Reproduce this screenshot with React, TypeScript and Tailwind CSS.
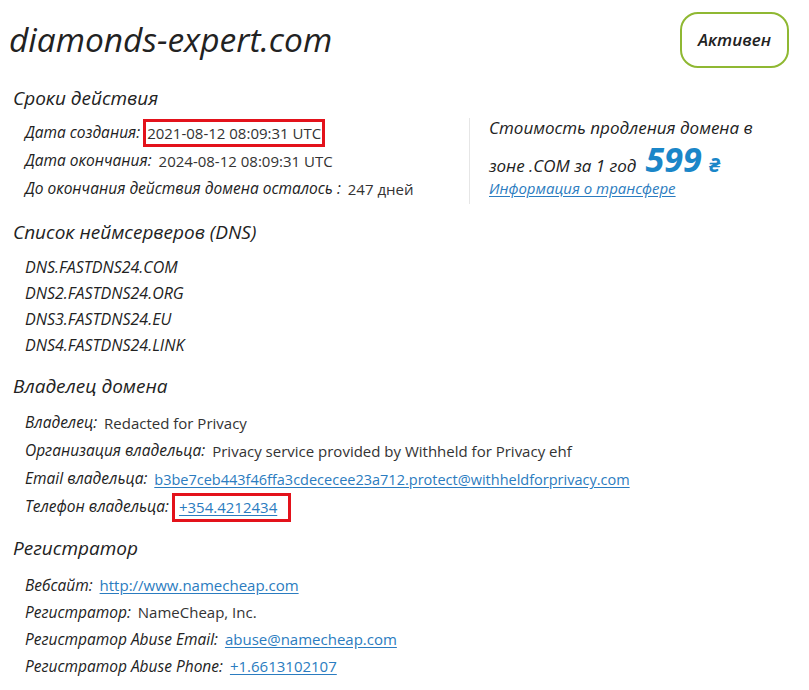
const font = { fontFamily: '"Open Sans", "Noto Sans", sans-serif' }

const linkCls = 'text-[#2b7cc0] underline underline-offset-2'

function Heading({ children, className = '' }: { children: React.ReactNode; className?: string }) {
  return (
    <h2 className={`pl-[13px] h-[24px] leading-[24px] text-[19px] italic text-[#222] ${className}`}>
      {children}
    </h2>
  )
}

function Row({ label, children, h }: { label: string; children: React.ReactNode; h: string }) {
  return (
    <div className={`flex items-center pl-[25px] ${h}`}>
      <span className="italic text-[15.5px] text-[#222] mr-[7px]">{label}</span>
      <span className="text-[15px] text-[#333]">{children}</span>
    </div>
  )
}

export default function App() {
  return (
    <div className="w-[809px] h-[690px] bg-white overflow-hidden" style={font}>
      {/* header */}
      <div className="flex items-center justify-between pt-[12px] pr-[20px]">
        <h1 className="pl-[9px] text-[33.5px] italic text-[#222] leading-none">diamonds-expert.com</h1>
        <div className="w-[109px] h-[56px] rounded-[18px] border-[2.5px] border-[#8fb832] flex items-center justify-center italic font-semibold text-[17px] text-[#222]">
          Активен
        </div>
      </div>

      {/* terms */}
      <Heading className="mt-[18px]">Сроки действия</Heading>
      <div className="flex mt-[9px] h-[84px]">
        <div className="w-[469px]">
          <Row label="Дата создания:" h="h-[28px]">
            <span className="inline-flex items-center h-[28px] px-[1px] -ml-[4px] border-[3px] border-[#e3121b]">
              2021-08-12 08:09:31 UTC
            </span>
          </Row>
          <Row label="Дата окончания:" h="h-[28px]">2024-08-12 08:09:31 UTC</Row>
          <Row label="До окончания действия домена осталось :" h="h-[28px]">247 дней</Row>
        </div>
        <div className="border-l border-[#e6e6e6] h-[86px] -mt-[1px]" />
        <div className="pl-[19px] text-[#222] italic text-[17px] h-[84px]">
          <div className="leading-[28px] -mt-[5px]">Стоимость продления домена в</div>
          <div className="flex items-baseline h-[32px]">
            <span>зоне .COM за 1 год</span>
            <span className="ml-[9px] text-[34px] font-bold text-[#1a86c8] leading-none">599</span>
            <span className="ml-[7px] text-[20px] font-bold text-[#1a86c8]">₴</span>
          </div>
          <a className={`${linkCls} block text-[15px] leading-[28px]`}>Информация о трансфере</a>
        </div>
      </div>

      {/* DNS */}
      <Heading className="mt-[17px]">Список неймсерверов (DNS)</Heading>
      <div className="mt-[10px] pl-[25px] italic text-[16px] text-[#222]">
        {['DNS.FASTDNS24.COM', 'DNS2.FASTDNS24.ORG', 'DNS3.FASTDNS24.EU', 'DNS4.FASTDNS24.LINK'].map((d) => (
          <div key={d} className="h-[26px] leading-[26px]">{d}</div>
        ))}
      </div>

      {/* owner */}
      <Heading className="mt-[16px]">Владелец домена</Heading>
      <div className="mt-[11px]">
        <Row label="Владелец:" h="h-[28px]">Redacted for Privacy</Row>
        <Row label="Организация владельца:" h="h-[28px]">Privacy service provided by Withheld for Privacy ehf</Row>
        <Row label="Email владельца:" h="h-[28px]">
          <a className={`${linkCls} text-[14.5px]`}>b3be7ceb443f46ffa3cdececee23a712.protect@withheldforprivacy.com</a>
        </Row>
        <Row label="Телефон владельца:" h="h-[28px]">
          <span className="inline-flex items-center h-[29px] w-[119px] pl-[4px] -ml-[4px] border-[3px] border-[#e3121b]">
            <a className={linkCls}>+354.4212434</a>
          </span>
        </Row>
      </div>

      {/* registrar */}
      <Heading className="mt-[15px]">Регистратор</Heading>
      <div className="mt-[12px]">
        <Row label="Вебсайт:" h="h-[27px]"><a className={linkCls}>http://www.namecheap.com</a></Row>
        <Row label="Регистратор:" h="h-[27px]">NameCheap, Inc.</Row>
        <Row label="Регистратор Abuse Email:" h="h-[27px]"><a className={linkCls}>abuse@namecheap.com</a></Row>
        <Row label="Регистратор Abuse Phone:" h="h-[27px]"><a className={linkCls}>+1.6613102107</a></Row>
      </div>
    </div>
  )
}
